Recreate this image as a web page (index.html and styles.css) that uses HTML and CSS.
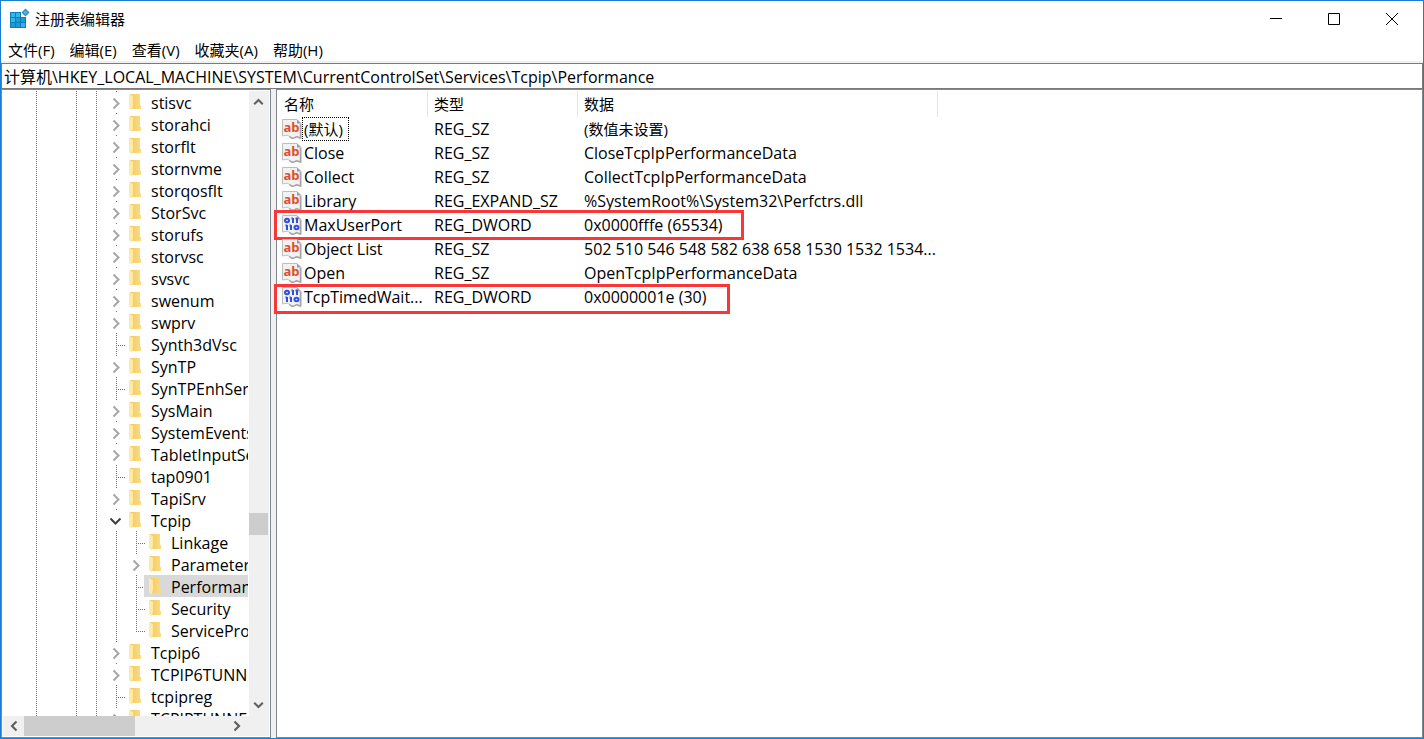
FILE: index.html
```
<!DOCTYPE html>
<html lang="zh-CN">
<head>
<meta charset="utf-8">
<title>注册表编辑器</title>
<link rel="stylesheet" href="styles.css">
</head>
<body>
<svg class="defs" aria-hidden="true">
  <defs>
    <linearGradient id="fold" x1="0" y1="0" x2="1" y2="0">
      <stop offset="0" stop-color="#f1cb62"/><stop offset="1" stop-color="#fbdc82"/>
    </linearGradient>
    <symbol id="folder" viewBox="0 0 13 18">
      <path d="M1 1H11V12H12V16H3Z" fill="url(#fold)"/>
      <path d="M0 1L4 3V12L3 17.500L0 15.500Z" fill="#ffe9a6"/>
    </symbol>
    <symbol id="paper" viewBox="0 0 20 20">
      <path d="M.5 .5H15L19 4.500V19L16.500 18.500Q15 17 13 18.500Q10 20.500 7.500 17.500Q5.500 15.500 3.500 16.500L.5 17Z" fill="#f1f1f1" stroke="#bdbdbd"/>
      <path d="M15 .5V4.500H19Z" fill="#9c9c9c"/>
      <path d="M18.500 5V19L16.500 18.500Q15 17 13 18.500Q10 20.500 7.500 17.500" fill="none" stroke="#a6a6a6" stroke-width="1.500"/>
    </symbol>
    <symbol id="string" viewBox="0 0 20 20">
      <use href="#paper"/>
      <text x="1.500" y="13" class="ab">ab</text>
    </symbol>
    <symbol id="binary" viewBox="0 0 20 20">
      <use href="#paper"/>
      <g fill="none" stroke="#3350dc" stroke-width="2">
        <ellipse cx="5" cy="5.500" rx="2" ry="1.800"/><path d="M11 3V8M9.500 3.500H11M15 3V8M13.500 3.500H15"/>
        <ellipse cx="14.500" cy="12.500" rx="2" ry="1.800"/><path d="M5 10V15M3.500 10.500H5M9 10V15M7.500 10.500H9"/>
      </g>
    </symbol>
    <symbol id="right" viewBox="0 0 20 21"><path d="M7.500 6.500L12.500 11.500L7.500 16.500" fill="none" stroke="#a6a6a6" stroke-width="2"/></symbol>
    <symbol id="down" viewBox="0 0 20 21"><path d="M4.500 8.500L9.500 13.500L14.500 8.500" fill="none" stroke="#404040" stroke-width="2"/></symbol>
    <symbol id="arrow" viewBox="0 0 20 20"><path d="M5.500 13.500L10 9L14.500 13.500" fill="none" stroke="#606060" stroke-width="2.200"/></symbol>
  </defs>
</svg>
<main class="window">
  <header class="title-bar">
    <svg class="app-icon" viewBox="0 0 20 20" aria-hidden="true">
      <path d="M0 3H11V8H16V19H0Z" fill="#0b7fb9"/>
      <path d="M1 4H5V8H1ZM6 4H10V8H6ZM1 9H5V13H1ZM11 14H15V18H11Z" fill="#35b4e8"/>
      <path d="M6 9H10V13H6ZM11 9H15V13H11ZM1 14H5V18H1ZM6 14H10V18H6Z" fill="#1c9bd6"/>
      <path d="M15.500 -.5L19.500 3.500L15.500 7.500L11.500 3.500Z" fill="#2d93c4"/>
      <path d="M15.500 1.500L17.500 3.500L15.500 5.500L13.500 3.500Z" fill="#5fb8df"/>
    </svg>
    <h1 class="title">注册表编辑器</h1>
    <div class="window-buttons">
      <button type="button" aria-label="最小化"><svg viewBox="0 0 12 12"><path d="M0 5.500H12"/></svg></button>
      <button type="button" aria-label="最大化"><svg viewBox="0 0 12 12"><path d="M.5 .5H11.500V11.500H.5Z"/></svg></button>
      <button type="button" aria-label="关闭"><svg viewBox="0 0 12 12"><path d="M0 0L12 12M12 0L0 12"/></svg></button>
    </div>
  </header>
  <nav class="menu" aria-label="菜单">
    <button type="button">文件(F)</button>
    <button type="button">编辑(E)</button>
    <button type="button">查看(V)</button>
    <button type="button">收藏夹(A)</button>
    <button type="button">帮助(H)</button>
  </nav>
  <input class="address" type="text" aria-label="地址" value="计算机\HKEY_LOCAL_MACHINE\SYSTEM\CurrentControlSet\Services\Tcpip\Performance">
  <div class="panes">
    <section class="tree-pane" aria-label="注册表项">
      <ul class="tree" id="tree"></ul>
      <div class="scroll scroll-y">
        <button type="button" aria-label="向上滚动"><svg><use href="#arrow"/></svg></button>
        <i class="gap-before"></i><i class="thumb"></i><i class="gap-after"></i>
        <button type="button" class="turn-down" aria-label="向下滚动"><svg><use href="#arrow"/></svg></button>
      </div>
      <div class="scroll scroll-x">
        <button type="button" class="turn-left" aria-label="向左滚动"><svg><use href="#arrow"/></svg></button>
        <i class="thumb"></i><i class="gap-after"></i>
        <button type="button" class="turn-right" aria-label="向右滚动"><svg><use href="#arrow"/></svg></button>
      </div>
      <div class="scroll-corner"></div>
    </section>
    <section class="list-pane" aria-label="值">
      <table class="values">
        <thead><tr><th class="col-name">名称</th><th class="col-type">类型</th><th class="col-data">数据</th></tr></thead>
        <tbody>
          <tr><td><div class="name"><svg><use href="#string"/></svg><span class="han focused">(默认)</span></div></td><td>REG_SZ</td><td class="han">(数值未设置)</td></tr>
          <tr><td><div class="name"><svg><use href="#string"/></svg><span>Close</span></div></td><td>REG_SZ</td><td>CloseTcpIpPerformanceData</td></tr>
          <tr><td><div class="name"><svg><use href="#string"/></svg><span>Collect</span></div></td><td>REG_SZ</td><td>CollectTcpIpPerformanceData</td></tr>
          <tr><td><div class="name"><svg><use href="#string"/></svg><span>Library</span></div></td><td>REG_EXPAND_SZ</td><td>%SystemRoot%\System32\Perfctrs.dll</td></tr>
          <tr><td><div class="name"><svg><use href="#binary"/></svg><span>MaxUserPort</span></div><i class="mark mark-port"></i></td><td>REG_DWORD</td><td>0x0000fffe (65534)</td></tr>
          <tr><td><div class="name"><svg><use href="#string"/></svg><span>Object List</span></div></td><td>REG_SZ</td><td>502 510 546 548 582 638 658 1530 1532 1534...</td></tr>
          <tr><td><div class="name"><svg><use href="#string"/></svg><span>Open</span></div></td><td>REG_SZ</td><td>OpenTcpIpPerformanceData</td></tr>
          <tr><td><div class="name"><svg><use href="#binary"/></svg><span>TcpTimedWait...</span></div><i class="mark mark-wait"></i></td><td>REG_DWORD</td><td>0x0000001e (30)</td></tr>
        </tbody>
      </table>
    </section>
  </div>
</main>
<script src="tree.js"></script>
</body>
</html>
```
FILE: tree.js
```
// Each key: [name, state, depth, flag]; state is "closed", "open" or "leaf".
const keys = [
  ["stisvc", "closed"], ["storahci", "closed"], ["storflt", "closed"], ["stornvme", "closed"],
  ["storqosflt", "closed"], ["StorSvc", "closed"], ["storufs", "closed"], ["storvsc", "closed"],
  ["svsvc", "closed"], ["swenum", "closed"], ["swprv", "closed"], ["Synth3dVsc", "leaf"],
  ["SynTP", "closed"], ["SynTPEnhService", "leaf"], ["SysMain", "closed"],
  ["SystemEventsBroker", "closed"], ["TabletInputService", "closed"], ["tap0901", "leaf"],
  ["TapiSrv", "closed"], ["Tcpip", "open"], ["Linkage", "leaf", 1], ["Parameters", "closed", 1],
  ["Performance", "leaf", 1, "selected"], ["Security", "leaf", 1], ["ServiceProvider", "leaf", 1, "last"],
  ["Tcpip6", "closed"], ["TCPIP6TUNNEL", "closed"], ["tcpipreg", "leaf"], ["TCPIPTUNNEL", "closed"]
];
const line = '<i class="guide line"></i>';
const toggle = (name, state) => state === "leaf"
  ? '<i class="guide line branch"></i>'
  : `<span class="guide line"><button type="button" class="toggle" aria-label="${name}"><svg><use href="#${state === "open" ? "down" : "right"}"/></svg></button></span>`;
document.getElementById("tree").innerHTML = keys.map(([name, state, depth = 0, flag = ""]) =>
  `<li class="key ${flag}">${line}<i class="guide"></i>${line}${line}${depth ? line : ""}${toggle(name, state)}` +
  `<span class="label"><svg><use href="#folder"/></svg>${name}</span></li>`).join("");
```
FILE: styles.css
```
* { box-sizing: border-box; }
body {
  margin: 0;
  font: 16px/22px "Open Sans", "Noto Sans CJK SC", sans-serif;
  color: #000;
}
button, input { font: inherit; color: inherit; border: 0; padding: 0; margin: 0; background: none; }
ul { list-style: none; margin: 0; padding: 0; }
svg { display: block; flex: none; }
.defs { position: absolute; width: 0; height: 0; }

.window {
  display: flex;
  flex-direction: column;
  height: 100vh;
  border: 1px solid #1a7fd3;
  background: #fff;
  overflow: hidden;
}
.title-bar { display: flex; align-items: center; height: 37px; padding: 0 2px 2px 9px; flex: none; }
.app-icon { width: 20px; height: 20px; overflow: visible; }
.title { margin: 0 0 0 5px; font-weight: 400; flex: 1; }
.title, .menu, th, .han { font-size: 15px; }
.window-buttons { display: flex; align-self: stretch; }
.window-buttons button { width: 58px; display: grid; place-items: center; }
.window-buttons svg { width: 12px; height: 12px; fill: none; stroke: #000; stroke-width: 1; }

.menu {
  display: flex;
  gap: 15px;
  flex: none;
  height: 25px;
  padding-left: 7px;
  border-bottom: 2px solid #f0f0f0;
}
.address {
  flex: none;
  width: 100%;
  height: 26px;
  padding: 0 2px;
  border: 1px solid #7a7a7a;
}

.panes { flex: 1; min-height: 0; display: flex; gap: 5px; background: #f0f0f0; }
.tree-pane {
  width: 270px;
  flex: none;
  display: grid;
  grid-template: minmax(0, 1fr) 20px / minmax(0, 1fr) 20px;
  padding: 1px;
  border: 1px solid #828790;
  background: #fff;
}
.tree { overflow: hidden; padding-left: 23px; margin-right: 1px; }
.key { display: flex; height: 22px; line-height: 24px; white-space: nowrap; }
.guide { width: 20px; flex: none; }
.line {
  background: repeating-linear-gradient(#707070 0 1px, transparent 1px 2px) 10px 0 / 1px 100% no-repeat;
}
.branch {
  background:
    repeating-linear-gradient(#707070 0 1px, transparent 1px 2px) 10px 0 / 1px 100% no-repeat,
    repeating-linear-gradient(90deg, #707070 0 1px, transparent 1px 2px) 10px 12px / 9px 1px no-repeat;
}
.last .branch { background-size: 1px 13px, 9px 1px; }
.toggle { display: block; width: 20px; height: 21px; margin-top: 1px; background: #fff; }
.toggle svg { width: 20px; height: 21px; }
.label { display: flex; flex: 1; gap: 9px; margin-left: -2px; padding-left: 5px; }
.label svg { width: 13px; height: 18px; margin-top: 2px; }
.selected .label { background: #d9d9d9; }

.scroll { display: flex; background: #f0f0f0; }
.scroll-y { flex-direction: column; }
.scroll button { width: 20px; height: 20px; flex: none; }
.scroll svg { width: 20px; height: 20px; }
.scroll-y button, .scroll-y svg { width: 19px; }
.scroll-x { padding-right: 1px; }
.turn-down { transform: rotate(180deg); }
.turn-left { transform: rotate(-90deg); }
.turn-right { transform: rotate(90deg); }
.thumb { background: #cdcdcd; flex: none; }
.scroll-y .thumb { height: 22px; width: 19px; }
.scroll-x .thumb { width: 111px; margin-left: 1px; }
.gap-before { flex: 402; }
.gap-after { flex: 161; }
.scroll-corner { background: #f0f0f0; }

.list-pane { flex: 1; min-width: 0; padding-top: 1px; border: 1px solid #828790; background: #fff; }
.values { border-collapse: separate; border-spacing: 0; table-layout: fixed; width: 661px; }
th { height: 26px; padding: 0 0 0 6px; text-align: left; font-weight: 400; border-right: 1px solid #e5e5e5; }
.col-name { width: 151px; padding-left: 7px; }
.col-type { width: 150px; }
tbody tr { position: relative; }
td { height: 24px; padding: 0 0 0 6px; white-space: nowrap; }
td:first-child { padding-left: 5px; }
.name { display: flex; align-items: center; gap: 1px; }
.name svg { width: 20px; height: 20px; }
.name span { padding: 0 1px; }
.name .focused { outline: 1px dotted #000; padding-right: 5px; }
.ab { font: bold 13px "Noto Sans", sans-serif; fill: #d9512c; }
.mark { position: absolute; left: -3px; height: 30px; border: 3px solid #fa3638; }
.mark-port { top: -3px; width: 470px; }
.mark-wait { top: -1px; width: 456px; }
```
